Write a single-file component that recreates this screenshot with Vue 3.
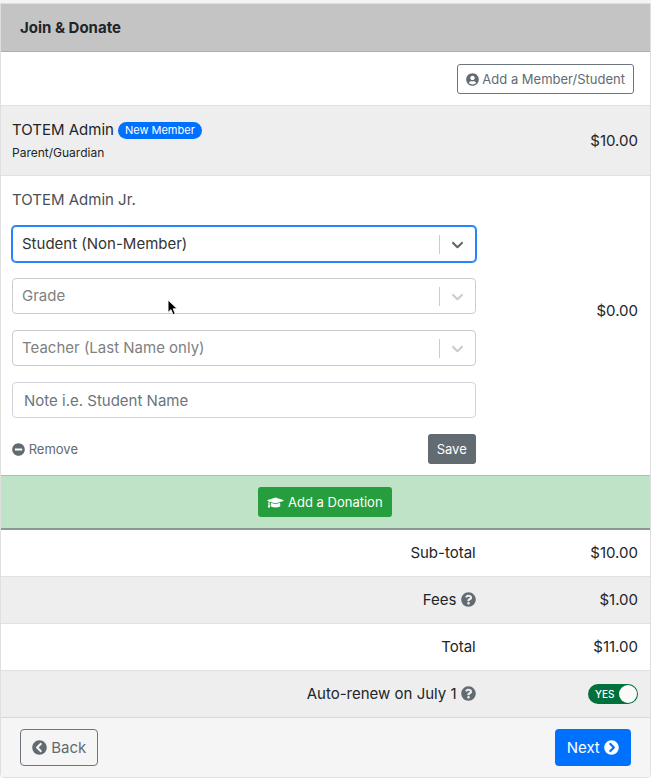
<template>
    <div class="page">
        <form class="card" @submit.prevent>
            <h1 class="card-header">Join &amp; Donate</h1>
            <div class="toolbar">
                <button type="button" class="btn btn-sm btn-outline">
                    <svg class="icon" viewBox="0 0 496 512"><path :d="icons.user" /></svg>
                    Add a Member/Student
                </button>
            </div>

            <table class="member-table">
                <colgroup>
                    <col class="col-main" />
                    <col />
                </colgroup>
                <tbody>
                    <tr class="shaded">
                        <td>
                            <div class="member-name">TOTEM Admin <span class="badge">New Member</span></div>
                            <div class="member-role">Parent/Guardian</div>
                        </td>
                        <td class="amount">$10.00</td>
                    </tr>
                    <tr class="editing">
                        <td>
                            <div class="member-name junior">TOTEM Admin Jr.</div>
                            <div class="fields">
                                <div v-for="field in fields" :key="field.id" class="select-box" :class="{ active: field.active }">
                                    <select :id="field.id" v-model="field.value" :aria-label="field.label">
                                        <option v-for="option in field.options" :key="option" :value="option">{{ option }}</option>
                                    </select>
                                    <span class="indicator">
                                        <svg viewBox="0 0 20 20"><path :d="icons.arrow" /></svg>
                                    </span>
                                    <svg v-if="field.pointer" class="pointer" viewBox="0 0 12 19">
                                        <path d="M1 1v14l3.300-3.100 2.300 5.600 2.500-1-2.300-5.500H11.300z" />
                                    </svg>
                                </div>
                                <input v-model="note" type="text" class="note" aria-label="Note" placeholder="Note i.e. Student Name">
                            </div>
                            <div class="member-actions">
                                <button type="button" class="remove">
                                    <svg class="icon" viewBox="0 0 512 512"><path :d="icons.minus" /></svg>
                                    Remove
                                </button>
                                <button type="button" class="btn btn-sm btn-secondary">Save</button>
                            </div>
                        </td>
                        <td class="amount">$0.00</td>
                    </tr>
                    <tr class="donation">
                        <td colspan="2">
                            <button type="button" class="btn btn-sm btn-success">
                                <svg class="icon icon-wide" viewBox="0 0 640 512"><path :d="icons.cap" /></svg>
                                Add a Donation
                            </button>
                        </td>
                    </tr>
                    <tr v-for="(row, index) in totals" :key="row.label" class="total" :class="{ shaded: index % 2 === 1 }">
                        <th scope="row">
                            {{ row.label }}
                            <svg v-if="row.help" class="icon help" viewBox="0 0 512 512"><path :d="icons.question" /></svg>
                        </th>
                        <td class="amount">{{ row.amount }}</td>
                    </tr>
                    <tr class="total shaded">
                        <th scope="row">
                            <label for="auto-renew">Auto-renew on July 1</label> <svg class="icon help" viewBox="0 0 512 512"><path :d="icons.question" /></svg>
                        </th>
                        <td class="amount">
                            <label class="switch" :class="{ on: autoRenew }">
                                <input id="auto-renew" v-model="autoRenew" type="checkbox">
                                <span class="switch-text">{{ autoRenew ? 'YES' : 'NO' }}</span>
                                <span class="knob"></span>
                            </label>
                        </td>
                    </tr>
                </tbody>
            </table>

            <div class="card-footer">
                <button type="button" class="btn btn-outline">
                    <svg class="icon" viewBox="0 0 512 512"><path :d="icons.left" /></svg>
                    Back
                </button>
                <button type="submit" class="btn btn-primary">
                    Next
                    <svg class="icon" viewBox="0 0 512 512"><path :d="icons.right" /></svg>
                </button>
            </div>
        </form>
    </div>
</template>

<script setup>
    import { ref } from 'vue'

    const note = ref('')
    const autoRenew = ref(true)

    const fields = ref([
        { id: 'type', label: 'Membership type', value: 'Student (Non-Member)', options: ['Student (Non-Member)'], active: true },
        { id: 'grade', label: 'Grade', value: 'Grade', options: ['Grade'], pointer: true },
        { id: 'teacher', label: 'Teacher', value: 'Teacher (Last Name only)', options: ['Teacher (Last Name only)'] }
    ])

    const totals = [
        { label: 'Sub-total', amount: '$10.00' },
        { label: 'Fees', amount: '$1.00', help: true },
        { label: 'Total', amount: '$11.00' }
    ]

    const icons = {
        user: 'M248 8C111 8 0 119 0 256s111 248 248 248 248-111 248-248S385 8 248 8zm0 96c48.6 0 88 39.4 88 88s-39.4 88-88 88-88-39.4-88-88 39.4-88 88-88zm0 344c-58.7 0-111.3-26.6-146.5-68.2 18.8-35.4 55.6-59.8 98.5-59.8 2.4 0 4.8.4 7.1 1.1 13 4.2 26.6 6.9 40.9 6.9 14.3 0 28-2.7 40.9-6.9 2.3-.7 4.7-1.1 7.1-1.1 42.9 0 79.7 24.4 98.5 59.8C359.3 421.4 306.7 448 248 448z',
        minus: 'M256 8C119 8 8 119 8 256s111 248 248 248 248-111 248-248S393 8 256 8zM124 296c-6.6 0-12-5.4-12-12v-56c0-6.6 5.4-12 12-12h264c6.6 0 12 5.4 12 12v56c0 6.6-5.4 12-12 12H124z',
        cap: 'M622.34 153.2L343.4 67.5c-15.2-4.67-31.6-4.67-46.79 0L17.66 153.2c-23.54 7.23-23.54 38.36 0 45.59l48.63 14.94c-10.67 13.19-17.23 29.28-17.88 46.9C38.78 266.15 32 276.11 32 288c0 10.78 5.68 19.85 13.86 25.65L20.33 428.53C18.11 438.52 25.71 448 35.94 448h56.11c10.24 0 17.84-9.48 15.62-19.47L82.14 313.65C90.32 307.85 96 298.78 96 288c0-11.57-6.47-21.25-15.66-26.87.76-15.02 8.44-28.3 20.69-36.72L296.6 284.5c9.06 2.78 26.44 6.25 46.79 0l278.95-85.7c23.55-7.24 23.55-38.36 0-45.6zM352.79 315.09c-28.53 8.76-52.84 3.92-65.59 0l-145.02-44.55L128 384c0 35.35 85.96 64 192 64s192-28.65 192-64l-14.18-113.47-145.03 44.56z',
        question: 'M504 256c0 136.997-111.043 248-248 248S8 392.997 8 256C8 119.083 119.043 8 256 8s248 111.083 248 248zM262.655 90c-54.497 0-89.255 22.957-116.549 63.758-3.536 5.286-2.353 12.415 2.715 16.258l34.699 26.31c5.205 3.947 12.621 3.008 16.665-2.122 17.864-22.658 30.113-35.797 57.303-35.797 20.429 0 45.698 13.148 45.698 32.958 0 14.976-12.363 22.667-32.534 33.976C247.128 238.528 216 254.941 216 296v4c0 6.627 5.373 12 12 12h56c6.627 0 12-5.373 12-12v-1.333c0-28.462 83.186-29.647 83.186-106.667 0-58.002-60.165-102-116.531-102zM256 338c-25.365 0-46 20.635-46 46 0 25.364 20.635 46 46 46s46-20.636 46-46c0-25.365-20.635-46-46-46z',
        left: 'M256 504C119 504 8 393 8 256S119 8 256 8s248 111 248 248-111 248-248 248zM142.1 273l135.5 135.5c9.4 9.4 24.6 9.4 33.9 0l17-17c9.4-9.4 9.4-24.6 0-33.9L226.9 256l101.6-101.6c9.4-9.4 9.4-24.6 0-33.9l-17-17c-9.4-9.4-24.6-9.4-33.9 0L142.1 239c-9.4 9.4-9.4 24.6 0 34z',
        right: 'M256 8c137 0 248 111 248 248S393 504 256 504 8 393 8 256 119 8 256 8zm113.9 231L234.4 103.5c-9.4-9.4-24.6-9.4-33.9 0l-17 17c-9.4 9.4-9.4 24.6 0 33.9L285.1 256 183.5 357.6c-9.4 9.4-9.4 24.6 0 33.9l17 17c9.4 9.4 24.6 9.4 33.9 0L369.9 273c9.4-9.4 9.4-24.6 0-34z',
        arrow: 'M4.516 7.548c0.436-0.446 1.043-0.481 1.576 0l3.908 3.747 3.908-3.747c0.533-0.481 1.141-0.446 1.574 0 0.436 0.445 0.408 1.197 0 1.615-0.406 0.418-4.695 4.502-4.695 4.502-0.217 0.223-0.502 0.335-0.787 0.335s-0.57-0.112-0.789-0.335c0 0-4.287-4.084-4.695-4.502s-0.436-1.17 0-1.615z'
    }
</script>

<style>
    body {
        background: #fff;
    }
</style>

<style scoped>
    * {
        box-sizing: border-box;
    }

    .page {
        border-top: 3px solid #f4f4f4;
        color: #212529;
        font-family: Inter, 'Liberation Sans', sans-serif;
        font-size: 15px;
        line-height: 24px;
    }

    .card {
        border: 1px solid #dfdfdf;
        border-radius: 0 0 4px 4px;
        overflow: hidden;
    }

    .card-header {
        margin: 0;
        padding: 12px 19px 11px;
        background: #c4c4c4;
        border-bottom: 1px solid #adadad;
        font-size: 15px;
        font-weight: 700;
    }

    .toolbar {
        display: flex;
        justify-content: flex-end;
        padding: 12px 16px 11px;
    }

    .btn {
        height: 37px;
        padding: 0 11px;
        border: 1px solid transparent;
        border-radius: 4px;
        color: #fff;
        font: inherit;
        white-space: nowrap;
        cursor: pointer;
    }

    .btn-sm {
        height: 30px;
        padding: 0 8px;
        border-radius: 3px;
        font-size: 13px;
    }

    .btn-outline {
        background: transparent;
        border-color: #6c757d;
        color: #626a72;
    }

    .btn-secondary {
        background: #626a72;
    }

    .btn-success {
        background: #269e3d;
    }

    .btn-primary {
        background: #0070ff;
    }

    .icon {
        width: 1em;
        height: 1em;
        fill: currentColor;
        vertical-align: -2px;
    }

    .icon-wide {
        width: 17px;
    }

    .help {
        color: #626a72;
    }

    .member-table {
        width: 100%;
        border-collapse: separate;
        border-spacing: 0;
        table-layout: fixed;
    }

    .col-main {
        width: 75%;
    }

    .member-table td,
    .member-table th {
        padding: 11px 12px 11px 11px;
        border-top: 1px solid #dee2e6;
        font-weight: 400;
    }

    .shaded {
        background: #eee;
    }

    .member-table .amount {
        text-align: right;
    }

    /* keeps the price level with the fields, not the action row */
    .member-table .editing .amount {
        padding-bottom: 41px;
    }

    .member-name {
        display: flex;
        align-items: center;
        gap: 4px;
        padding-top: 1px;
    }

    .junior {
        color: #495057;
    }

    .badge {
        padding: 0 7px;
        border-radius: 9px;
        background: #0070ff;
        color: #fff;
        font-size: 11px;
        line-height: 17px;
    }

    .member-role {
        font-size: 12px;
        line-height: 22px;
    }

    .fields {
        display: grid;
        gap: 16px;
        margin: 14px 0 16px;
    }

    .select-box {
        position: relative;
        color: #ccc;
    }

    .select-box select,
    .note {
        display: block;
        width: 100%;
        height: 36px;
        padding: 0 46px 0 9px;
        border: 1px solid #ccc;
        border-radius: 4px;
        outline: none;
        appearance: none;
        background: #fff;
        color: #808080;
        font: inherit;
    }

    .note {
        padding: 0 11px;
        border-color: #ced4da;
        color: #495057;
    }

    .note::placeholder {
        color: #6c757d;
        opacity: 1;
    }

    .select-box.active {
        color: #666;
    }

    .select-box.active select {
        border-color: #2684ff;
        box-shadow: 0 0 0 1px #2684ff;
        color: #333;
    }

    .indicator {
        position: absolute;
        top: 9px;
        right: 0;
        display: flex;
        align-items: center;
        justify-content: center;
        width: 37px;
        height: 19px;
        border-left: 1px solid #ccc;
        pointer-events: none;
    }

    .indicator svg {
        width: 19px;
        height: 19px;
        fill: currentColor;
    }

    .pointer {
        position: absolute;
        top: 21px;
        left: 155px;
        width: 11px;
        height: 17px;
        overflow: visible;
        fill: #000;
        stroke: #fff;
        stroke-width: 1;
    }

    .member-actions {
        display: flex;
        align-items: center;
        justify-content: space-between;
    }

    .remove {
        padding: 0;
        border: 0;
        background: none;
        color: #626a72;
        font: inherit;
        font-size: 13px;
        cursor: pointer;
    }

    .member-table .donation td {
        border-top: 1px solid #8fd19e;
        border-bottom: 2px solid #8b9a90;
        background: #bfe3c7;
        text-align: center;
        line-height: 0;
    }

    .member-table .donation + .total > * {
        border-top: 0;
    }

    .member-table .total th {
        text-align: right;
    }

    .switch {
        position: relative;
        display: flex;
        align-items: center;
        justify-content: space-between;
        width: 50px;
        height: 20px;
        margin-left: auto;
        padding: 0 1px 0 7px;
        border-radius: 10px;
        background: #999;
        color: #fff;
        cursor: pointer;
    }

    .switch.on {
        background: #00703c;
    }

    .switch input {
        position: absolute;
        inset: 0;
        width: 100%;
        height: 100%;
        margin: 0;
        opacity: 0;
    }

    .switch-text {
        font-size: 10px;
        font-weight: 500;
        line-height: 20px;
    }

    .knob {
        width: 18px;
        height: 18px;
        border-radius: 50%;
        background: #fafafa;
    }

    .card-footer {
        display: flex;
        justify-content: space-between;
        padding: 11px 19px;
        border-top: 1px solid #d8d8d8;
        background: #f5f5f5;
    }
</style>
